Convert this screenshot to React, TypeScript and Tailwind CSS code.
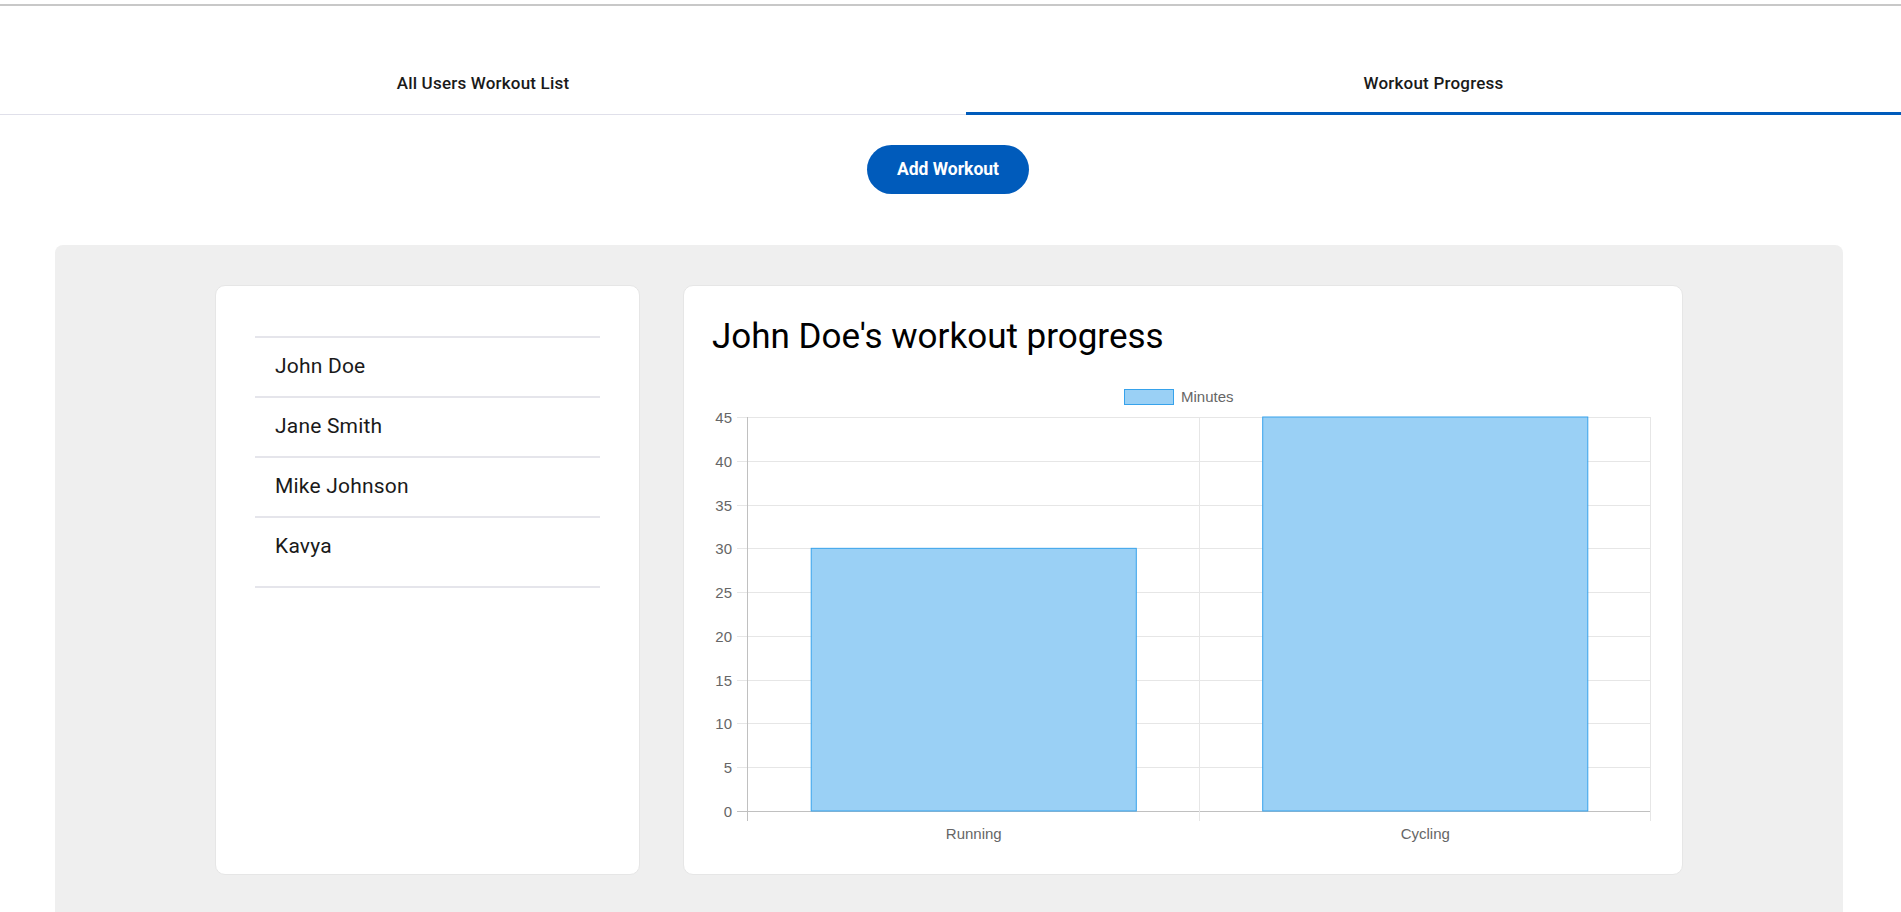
import { useState } from 'react';

const users = ['John Doe', 'Jane Smith', 'Mike Johnson', 'Kavya'];

const workouts = [
  { label: 'Running', minutes: 30 },
  { label: 'Cycling', minutes: 45 },
];

// chart geometry, in svg px
const AXIS_X = 35;
const PLOT_R = 938;
const TOP_Y = 58;
const ZERO_Y = 452;
const MAX = 45;
const STEP = 5;

function ProgressChart() {
  const yFor = (v: number) => ZERO_Y - (v / MAX) * (ZERO_Y - TOP_Y);
  const ticks = Array.from({ length: MAX / STEP + 1 }, (_, i) => i * STEP);
  const catW = (PLOT_R - AXIS_X) / workouts.length;
  const barW = catW * 0.72;

  return (
    <svg width={941} height={487} className="block" style={{ fontFamily: '"Liberation Sans", Arial, sans-serif' }}>
      {/* legend */}
      <rect x={412.5} y={30.5} width={49} height={15} fill="#9ad0f5" stroke="#36a2eb" strokeWidth={1} />
      <text x={469} y={43} fontSize={15} fill="#666">Minutes</text>

      {/* horizontal grid + y labels */}
      {ticks.map((t) => {
        const y = Math.round(yFor(t)) + 0.5;
        const zero = t === 0;
        return (
          <g key={t}>
            <line x1={AXIS_X - 10} x2={PLOT_R} y1={y} y2={y} stroke={zero ? '#c0c0c0' : '#e6e6e6'} strokeWidth={1} />
            <text x={20} y={y + 5} fontSize={15} fill="#666" textAnchor="end">{t}</text>
          </g>
        );
      })}

      {/* vertical grid */}
      {[0, 1, 2].map((i) => {
        const x = Math.round(AXIS_X + i * catW) + 0.5;
        return (
          <line key={i} x1={x} x2={x} y1={TOP_Y} y2={ZERO_Y + 10} stroke={i === 0 ? '#c0c0c0' : '#e6e6e6'} strokeWidth={1} />
        );
      })}

      {/* bars */}
      {workouts.map((w, i) => {
        const cx = AXIS_X + catW * (i + 0.5) + 1;
        const top = yFor(w.minutes);
        return (
          <g key={w.label}>
            <rect x={cx - barW / 2} y={top} width={barW} height={ZERO_Y - top} fill="#9ad0f5" stroke="#36a2eb" strokeWidth={1} />
            <text x={cx} y={480} fontSize={15} fill="#666" textAnchor="middle">{w.label}</text>
          </g>
        );
      })}
    </svg>
  );
}

export default function App() {
  const [tab, setTab] = useState(1);
  const [selected] = useState(users[0]);

  return (
    <div className="min-h-screen bg-white text-[#1a1a1a]" style={{ fontFamily: 'Roboto, "Liberation Sans", Arial, sans-serif' }}>
      <div className="pt-[4px]">
        <div className="h-[2px] bg-[#c8c8c8]" />
      </div>

      {/* tabs */}
      <div className="flex h-[109px] border-b border-[#e0e0ea]">
        {['All Users Workout List', 'Workout Progress'].map((label, i) => (
          <button
            key={label}
            onClick={() => setTab(i)}
            className={`relative flex items-end justify-center pb-[18px] text-[17px] font-medium tracking-[0.2px] text-[#1a1a1a] ${i === 0 ? 'w-[966px]' : 'flex-1'}`}
          >
            {label}
            {tab === i && <span className="absolute bottom-[-1px] left-0 right-0 h-[3px] bg-[#005bbb]" />}
          </button>
        ))}
      </div>

      <div className="flex justify-center pt-[30px] pr-[5px]">
        <button className="h-[49px] w-[162px] rounded-full bg-[#005bbb] text-[17.5px] font-bold text-white">
          Add Workout
        </button>
      </div>

      {/* progress panel */}
      <div className="ml-[55px] mr-[58px] mt-[51px] rounded-t-[8px] bg-[#efefef] pt-[40px] pb-[41px]">
        <div className="flex justify-center gap-[43px]">
          <div className="h-[590px] w-[425px] rounded-[10px] border border-[#e6e6e6] bg-white px-[39px] pt-[50px]">
            <ul className="border-b-2 border-[#e5e5eb] pb-[10px]">
              {users.map((u) => (
                <li key={u} className="flex h-[60px] items-center border-t-2 border-[#e5e5eb] pl-[20px] text-[21px] tracking-[0.2px] text-[#1a1a1a]">
                  {u}
                </li>
              ))}
            </ul>
          </div>

          <div className="h-[590px] w-[1000px] rounded-[10px] border border-[#e6e6e6] bg-white px-[28px] pt-[29px]">
            <h2 className="text-[35px] leading-[44px] font-normal text-black">{selected}'s workout progress</h2>
            <ProgressChart />
          </div>
        </div>
      </div>
    </div>
  );
}
